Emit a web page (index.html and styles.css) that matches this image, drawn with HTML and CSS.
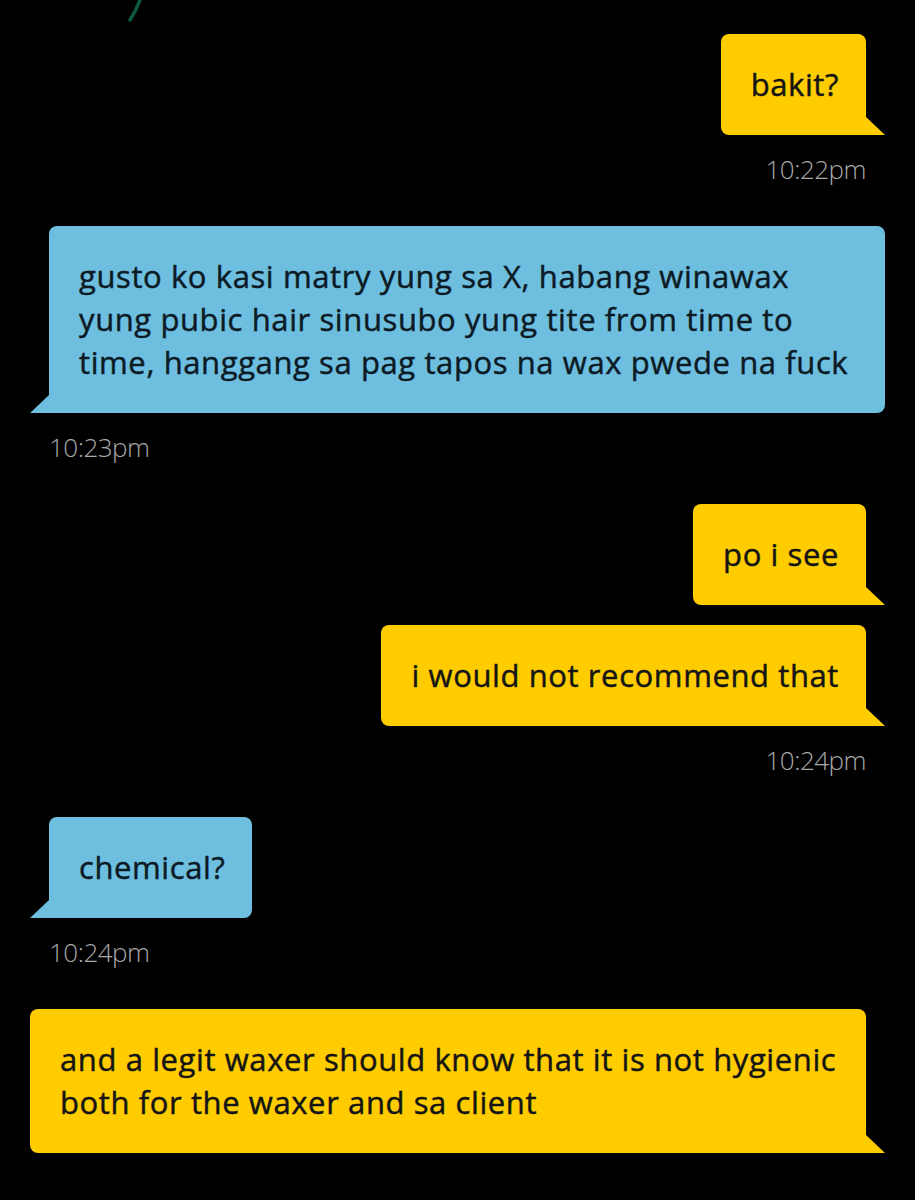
FILE: index.html
```html
<!DOCTYPE html>
<html lang="tl">
<head>
    <meta charset="UTF-8">
    <meta name="viewport" content="width=device-width, initial-scale=1.0">
    <title>Chat</title>
    <link rel="stylesheet" href="styles.css">
</head>
<body>
    <svg class="leaf" width="30" height="24" viewBox="0 0 30 24">
        <path d="M8 20 C12 14, 15 8, 18 0" fill="none" stroke="#0d5a42" stroke-width="3.5" stroke-linecap="round"/>
    </svg>

    <div class="chat">
        <div class="group out">
            <div class="bubble">bakit?</div>
            <div class="time">10:22pm</div>
        </div>

        <div class="group in">
            <div class="bubble">gusto ko kasi matry yung sa X, habang winawax yung pubic hair sinusubo yung tite from time to time, hanggang sa pag tapos na wax pwede na fuck</div>
            <div class="time">10:23pm</div>
        </div>

        <div class="group out">
            <div class="bubble">po i see</div>
            <div class="bubble">i would not recommend that</div>
            <div class="time">10:24pm</div>
        </div>

        <div class="group in">
            <div class="bubble">chemical?</div>
            <div class="time">10:24pm</div>
        </div>

        <div class="group out">
            <div class="bubble">and a legit waxer should know that it is not hygienic both for the waxer and sa client</div>
        </div>
    </div>
</body>
</html>
```

FILE: styles.css
```css
body {
    margin: 0;
    background: #000;
    font-family: "Open Sans", "Noto Sans", sans-serif;
}
.leaf {
    position: absolute;
    top: 0;
    left: 122px;
}
.chat {
    display: flex;
    flex-direction: column;
    gap: 42px;
    padding: 34px 30px 0 30px;
}
.group {
    display: flex;
    flex-direction: column;
    gap: 20px;
}
.group.out {
    align-items: flex-end;
    margin-right: 19px;
}
.group.in {
    align-items: flex-start;
    margin-left: 19px;
}
.bubble {
    position: relative;
    box-sizing: border-box;
    max-width: 836px;
    padding: 29px 27px 29px 30px;
    font-size: 31px;
    line-height: 43px;
    letter-spacing: 0.6px;
    -webkit-text-stroke: 0.45px currentColor;
    border-radius: 8px;
}
.bubble::after {
    content: "";
    position: absolute;
    bottom: 0;
    width: 19px;
    height: 18px;
    background: inherit;
}
.out .bubble {
    background: #ffcc00;
    color: #141414;
    border-bottom-right-radius: 0;
}
.out .bubble::after {
    right: -19px;
    clip-path: polygon(0 0, 100% 100%, 0 100%);
}
.in .bubble {
    background: #6ebee0;
    color: #0c1a24;
    border-bottom-left-radius: 0;
}
.in .bubble::after {
    left: -19px;
    clip-path: polygon(100% 0, 100% 100%, 0 100%);
}
.time {
    margin-top: -1px;
    font-size: 26px;
    font-weight: 300;
    line-height: 30px;
    letter-spacing: -0.5px;
    color: #a8a8a8;
}
```
